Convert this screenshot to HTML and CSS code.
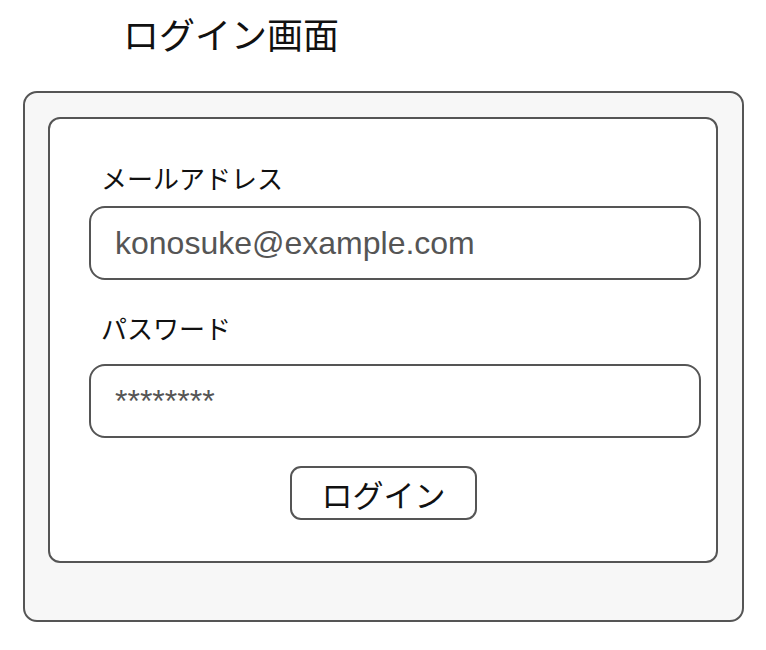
FILE: index.html
```html
<!DOCTYPE html>
<html lang="ja">
<head>
<meta charset="utf-8">
<title>ログイン画面</title>
<link rel="stylesheet" href="styles.css">
</head>
<body>
<h1 class="title">ログイン画面</h1>
<div class="outer">
  <form class="inner">
    <label class="label label-email">メールアドレス</label>
    <div class="field">konosuke@example.com</div>
    <label class="label label-pass">パスワード</label>
    <div class="field">********</div>
    <div class="actions">
      <button type="button" class="btn">ログイン</button>
    </div>
  </form>
</div>
</body>
</html>
```

FILE: styles.css
```css
* { box-sizing: border-box; }
html, body { margin: 0; padding: 0; background: #fff; }
body {
  font-family: "Noto Sans CJK JP", "Liberation Sans", sans-serif;
  color: #111;
}
.title {
  margin: 0;
  padding: 13px 0 0 123px;
  height: 91px;
  font-size: 36px;
  font-weight: normal;
  line-height: 40px;
}
.outer {
  margin-left: 23px;
  width: 721px;
  height: 531px;
  border: 2px solid #555;
  border-radius: 14px;
  background: #f7f7f7;
  padding: 24px 24px 57px 23px;
}
.inner {
  height: 446px;
  border: 2px solid #555;
  border-radius: 12px;
  background: #fff;
  padding: 0 15px 0 39px;
  display: flex;
  flex-direction: column;
}
.label {
  display: block;
  font-size: 26px;
  line-height: 30px;
  margin-left: 12px;
}
.label-email { margin-top: 44px; margin-bottom: 13px; }
.label-pass { margin-top: 33px; margin-bottom: 21px; }
.field {
  width: 612px;
  height: 74px;
  border: 2px solid #555;
  border-radius: 16px;
  font-family: "Liberation Sans", Arial, sans-serif;
  font-size: 32px;
  line-height: 70px;
  color: #555;
  padding-left: 24px;
}
.actions {
  display: flex;
  justify-content: center;
  margin-top: 28px;
  padding-right: 23px;
}
.btn {
  width: 187px;
  height: 54px;
  border: 2px solid #555;
  border-radius: 11px;
  background: #fff;
  font-family: "Noto Sans CJK JP", sans-serif;
  font-size: 31px;
  line-height: 1;
  color: #111;
  padding: 0;
}
```
